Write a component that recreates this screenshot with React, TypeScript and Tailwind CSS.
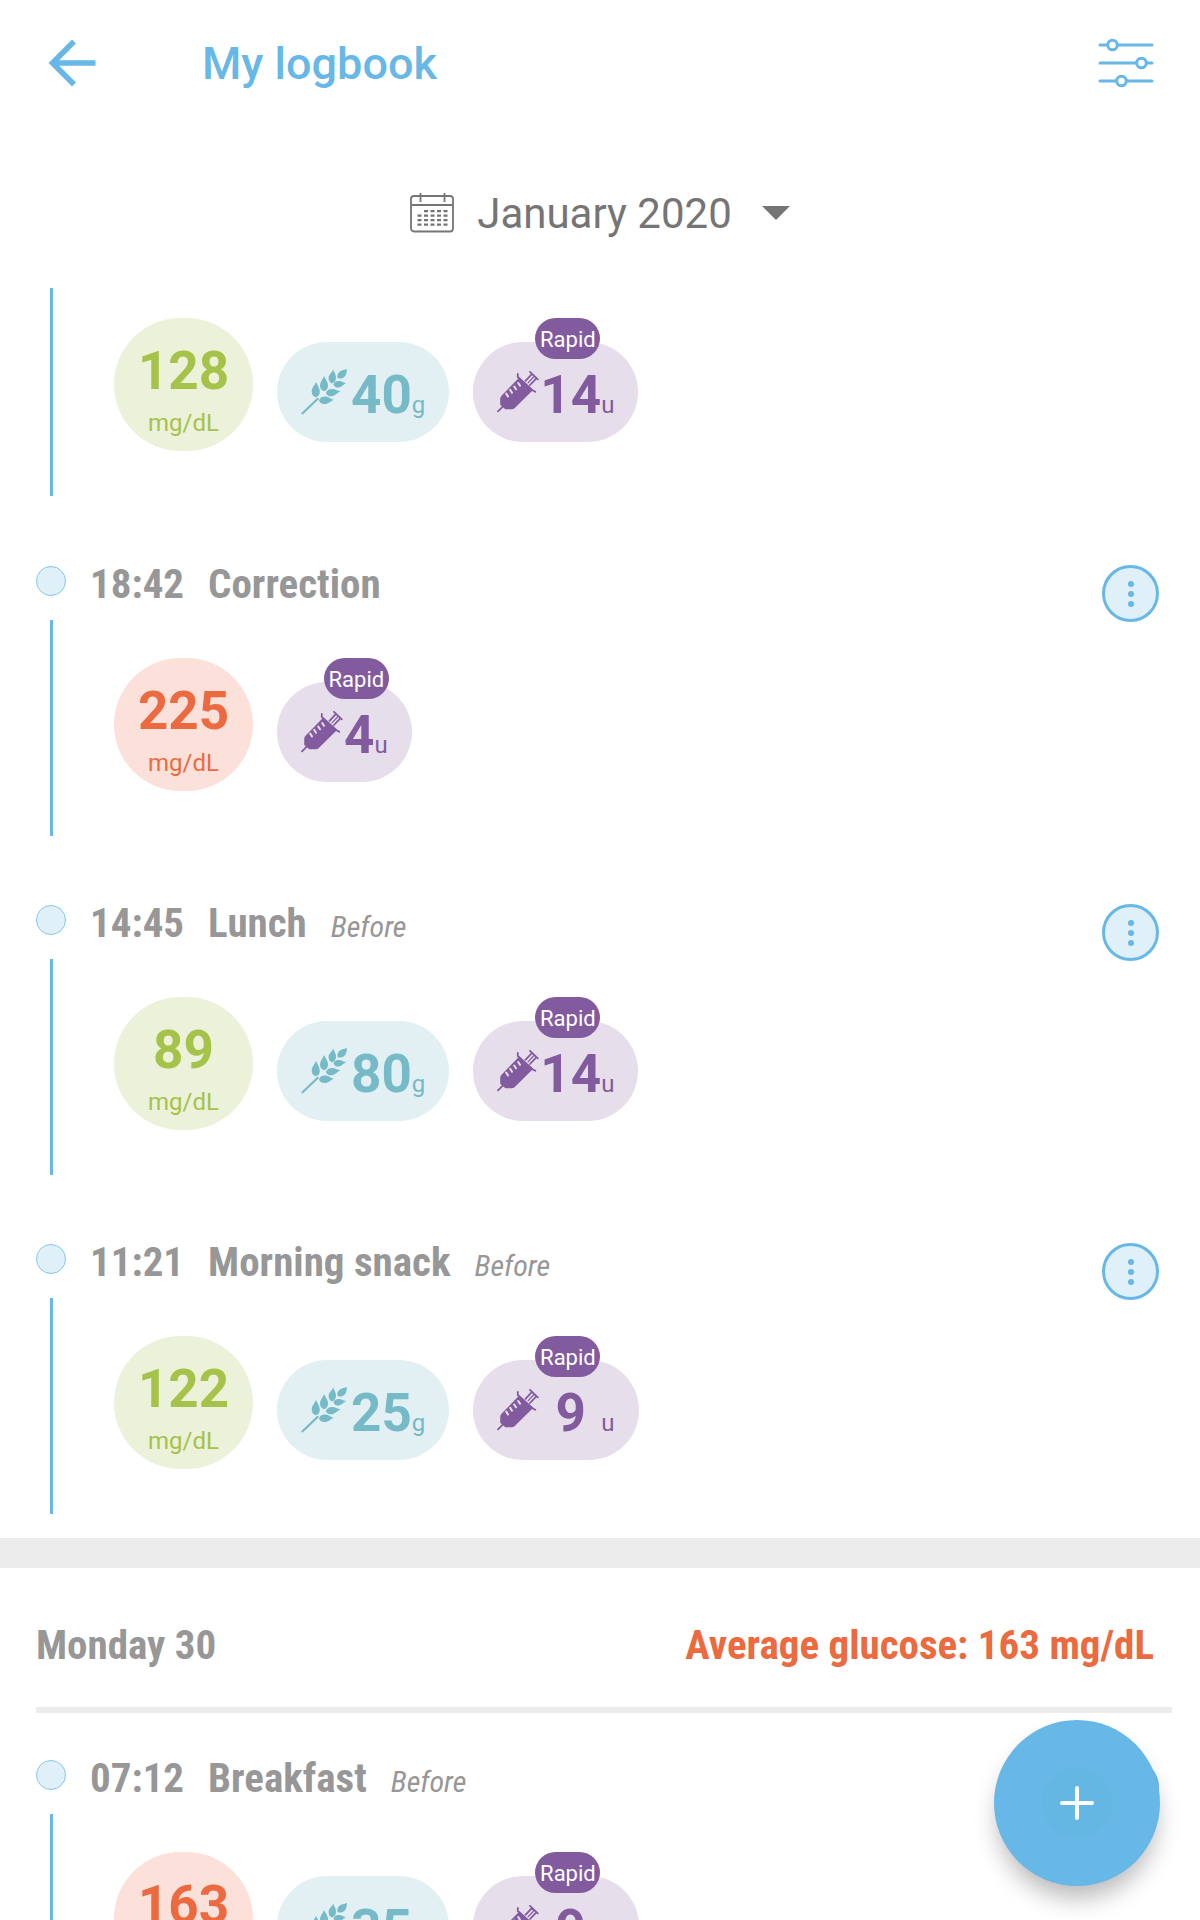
import React from "react";

type Insulin = { value: number; fixedWidth?: boolean };
type LogEntry = {
  time: string;
  name: string;
  note?: string;
  glucose: number;
  high?: boolean;
  carbs?: number;
  insulin: Insulin;
};

const tuesday: LogEntry[] = [
  { time: "18:42", name: "Correction", glucose: 225, high: true, insulin: { value: 4 } },
  { time: "14:45", name: "Lunch", note: "Before", glucose: 89, carbs: 80, insulin: { value: 14 } },
  { time: "11:21", name: "Morning snack", note: "Before", glucose: 122, carbs: 25, insulin: { value: 9, fixedWidth: true } },
];

const monday: LogEntry = {
  time: "07:12",
  name: "Breakfast",
  note: "Before",
  glucose: 163,
  high: true,
  carbs: 35,
  insulin: { value: 9, fixedWidth: true },
};

function BackIcon() {
  return (
    <svg width="48" height="48" viewBox="0 0 48 48" fill="none" stroke="currentColor" strokeWidth="5.6" aria-hidden="true">
      <path d="M26 2.5 4.5 24 26 45.5M4.5 24H47.5" />
    </svg>
  );
}

function FilterIcon() {
  return (
    <svg width="56" height="50" viewBox="0 0 56 50" fill="none" stroke="currentColor" strokeWidth="3" strokeLinecap="round" aria-hidden="true">
      <path d="M2 7H9M20 7H54M2 25H38M49 25H54M2 43H18M29 43H54" />
      <circle cx="14.5" cy="7" r="4.8" />
      <circle cx="43.5" cy="25" r="4.8" />
      <circle cx="23.5" cy="43" r="4.8" />
    </svg>
  );
}

function CalendarIcon() {
  return (
    <svg width="44" height="40" viewBox="0 0 44 40" fill="none" stroke="currentColor" strokeWidth="1.8" aria-hidden="true">
      <rect x="1" y="3" width="42" height="35.5" rx="3" />
      <path d="M1 12H43M10.5 0V9M34.5 0V9" />
      <path d="M14 18.2H38M7.5 22.7H38M7.5 27.2H38M7.5 31.7H38" strokeWidth="2.2" strokeDasharray="4 2.5" />
    </svg>
  );
}

function WheatIcon() {
  return (
    <svg width="46" height="46" viewBox="0 0 46 46" fill="currentColor" className="shrink-0" aria-hidden="true">
      <path d="M.8 45 17.3 29.3" stroke="currentColor" strokeWidth="2.2" />
      <path d="M15 13C17 17 18.8 19.5 18.8 22.8 18.8 26 17.5 27.5 14.3 28.2 11.5 26.8 10.6 25 10.7 22 10.8 19 13.5 16.5 15 13Z" />
      <path d="M23 7C25 11 27 13 27 16.5 27 19.8 25.5 21.5 22.8 22.2 20 20.8 18.9 19 19 16 19.1 12.8 22 10.5 23 7Z" />
      <path d="M32.3.5C33.5 4 35.3 6 35 9.3 34.7 12.3 33.3 13.8 30.6 14.5 28.5 13.2 27.4 11.3 27.6 8.6 27.8 5.6 31 3.6 32.3.5Z" />
      <path d="M46 0C45.5 3.5 45.5 6 43.2 8 41 9.8 38.8 9.8 36.7 9.3 36 7 36.2 5.2 38 3.2 40 1 42.8 1.3 46 0Z" />
      <path d="M45.3 14C42.3 15.2 41 18 37.8 18.5 35.3 18.9 33.5 17.6 32.4 15.2 33.6 12.8 35.3 11.7 38 11.9 41 12.1 42.3 13.7 45.3 14Z" />
      <path d="M39.5 22.2C36.2 23.4 34.8 26.5 31.3 27.2 28.3 27.8 26.3 26.7 24.8 24 26 21.3 27.8 19.9 31 19.9 34.5 19.9 36 22 39.5 22.2Z" />
      <path d="M33 30.7C29.8 31.8 28.3 34.3 24.8 34.9 21.8 35.4 19.3 34.5 18 31.8 18.5 28.8 20.8 27.4 24 27.4 27.8 27.4 29.3 30 33 30.7Z" />
    </svg>
  );
}

function SyringeIcon() {
  return (
    <svg width="43" height="42" viewBox="0 0 43 42" className="shrink-0" aria-hidden="true">
      <path d="M22.3 6.5 36.3 18.8 18.3 36.5C16.8 38 15.5 38.3 13.5 38.3H8.3L3.2 33.7V28.5C3.2 26.5 3.8 25.4 5 24.2Z" fill="currentColor" />
      <g fill="none" stroke="currentColor" strokeWidth="1.8" strokeLinecap="round">
        <path d="M1 40.3 6 35.3M20.8 3V6L35.5 19.3 38.3 20.8M28.5 9.8 34.8 3.2M33 14 39.3 7.3M33 .8 40.8 8.3" />
        <path d="M31 11.8 37 5.5" strokeWidth="1.2" />
      </g>
      <path d="M9.2 22.6 11 25.4M13.2 18.9 15 21.7M17.2 15.5 19 18.3M21.2 12 23 14.8" stroke="#e6deeb" strokeWidth="2" strokeLinecap="round" />
    </svg>
  );
}

function Readings({ glucose, high, carbs, insulin }: Pick<LogEntry, "glucose" | "high" | "carbs" | "insulin">) {
  return (
    <div className="flex items-start gap-6">
      <div
        className={`flex h-[133px] w-[139px] flex-col items-center rounded-full pt-[21px] ${
          high ? "bg-[#fce1da] text-[#eb6a40]" : "bg-[#ecf1da] text-[#a5c249]"
        }`}
      >
        <span className="text-[53px] leading-[64px] font-bold">{glucose}</span>
        <span className="text-[24px] leading-[40px]">mg/dL</span>
      </div>
      {carbs !== undefined && (
        <div className="mt-6 flex h-[100px] items-center rounded-full bg-[#e2f0f4] px-6 text-[#76b9c7]">
          <WheatIcon />
          <span className="ml-1 flex items-baseline pt-1.5">
            <span className="text-[53px] leading-[64px] font-bold">{carbs}</span>
            <span className="text-[24px]">g</span>
          </span>
        </div>
      )}
      <div className="relative mt-6 flex h-[100px] items-center rounded-full bg-[#e6deeb] px-6 text-[#825b9f]">
        <div className="absolute inset-x-0 -top-6 flex justify-center pl-6">
          <span className="flex h-[41px] w-[65px] items-center justify-center rounded-full bg-[#825b9f] pt-0.5 text-[22px] text-white">
            Rapid
          </span>
        </div>
        <SyringeIcon />
        <span className="flex items-baseline pt-1.5">
          <span className={`text-center text-[53px] leading-[64px] font-bold ${insulin.fixedWidth ? "w-[61px]" : ""}`}>
            {insulin.value}
          </span>
          <span className="text-[24px]">u</span>
        </span>
      </div>
    </div>
  );
}

function Entry({ entry }: { entry: LogEntry }) {
  return (
    <article>
      <div className="flex h-[101px] items-start justify-between pr-[41px] pl-9">
        <div className="flex items-start pt-[38px]">
          <span className="mt-[9px] h-[30px] w-[30px] rounded-full border border-[#84c6ee] bg-[#e0f0f9]" />
          <h3 className="ml-6 flex items-baseline gap-6 font-['Roboto_Condensed','Roboto',sans-serif] leading-[54px] text-[#979797]">
            <span className="text-[41px] font-bold">{entry.time}</span>
            <span className="text-[41px] font-bold">{entry.name}</span>
            {entry.note && <span className="text-[30px] font-normal italic">{entry.note}</span>}
          </h3>
        </div>
        <button
          type="button"
          aria-label={`Options for ${entry.name}`}
          className="mt-[46px] flex h-[57px] w-[57px] flex-col items-center justify-center gap-1 rounded-full border-[3px] border-[#67b7e7] bg-[#e0f0f9]"
        >
          <span className="h-1.5 w-1.5 rounded-full bg-[#67b7e7]" />
          <span className="h-1.5 w-1.5 rounded-full bg-[#67b7e7]" />
          <span className="h-1.5 w-1.5 rounded-full bg-[#67b7e7]" />
        </button>
      </div>
      <div className="ml-[50px] h-[216px] border-l-[3px] border-[#67b7e7] pt-[38px] pl-[61px]">
        <Readings {...entry} />
      </div>
    </article>
  );
}

export default function App() {
  return (
    <div className="flex h-screen flex-col overflow-hidden bg-white font-['Roboto',sans-serif]">
      <header className="flex h-[125px] shrink-0 items-center pr-[46px] pl-12 text-[#67b7e7]">
        <button type="button" aria-label="Back">
          <BackIcon />
        </button>
        <h1 className="ml-[106px] pt-0.5 text-[45px] font-medium">My logbook</h1>
        <button type="button" aria-label="Filter" className="ml-auto">
          <FilterIcon />
        </button>
      </header>

      <div className="flex h-[163px] shrink-0 justify-center pt-[59px]">
        <button type="button" className="flex h-[58px] items-center text-[42px] text-[#757575]">
          <CalendarIcon />
          <span className="ml-[23px]">January 2020</span>
          <svg width="28" height="14" viewBox="0 0 28 14" className="ml-[30px]" fill="currentColor" aria-hidden="true">
            <path d="M0 0H28L14 14Z" />
          </svg>
        </button>
      </div>

      <main className="min-h-0 flex-1 overflow-hidden">
        <div className="ml-[50px] h-[208px] border-l-[3px] border-[#67b7e7] pt-[30px] pl-[61px]">
          <Readings glucose={128} carbs={40} insulin={{ value: 14 }} />
        </div>
        <div className="flex flex-col gap-[22px] pt-[23px]">
          {tuesday.map((entry) => (
            <Entry key={entry.time} entry={entry} />
          ))}
        </div>
        <section className="mt-6 border-t-[30px] border-[#ececec]">
          <div className="ml-9 mr-7 flex h-[145px] items-center justify-between border-b-[6px] border-[#ececec] pt-4 pr-[18px] font-['Roboto_Condensed','Roboto',sans-serif] text-[41px] font-bold">
            <h2 className="text-[#979797]">Monday 30</h2>
            <p className="text-[#eb6a40]">Average glucose: 163 mg/dL</p>
          </div>
          <Entry entry={monday} />
        </section>
      </main>

      <button
        type="button"
        aria-label="Add entry"
        className="fixed right-10 bottom-[34px] flex h-[166px] w-[166px] items-center justify-center rounded-full bg-[#67b7e7] text-white shadow-[0_16px_24px_-4px_rgba(0,0,0,0.28)]"
      >
        <svg width="72" height="72" viewBox="0 0 72 72" aria-hidden="true">
          <circle cx="36" cy="36" r="35" fill="#64b6e3" />
          <path d="M36 21V51M21 36H51" stroke="currentColor" strokeWidth="4" strokeLinecap="round" />
        </svg>
      </button>
    </div>
  );
}
